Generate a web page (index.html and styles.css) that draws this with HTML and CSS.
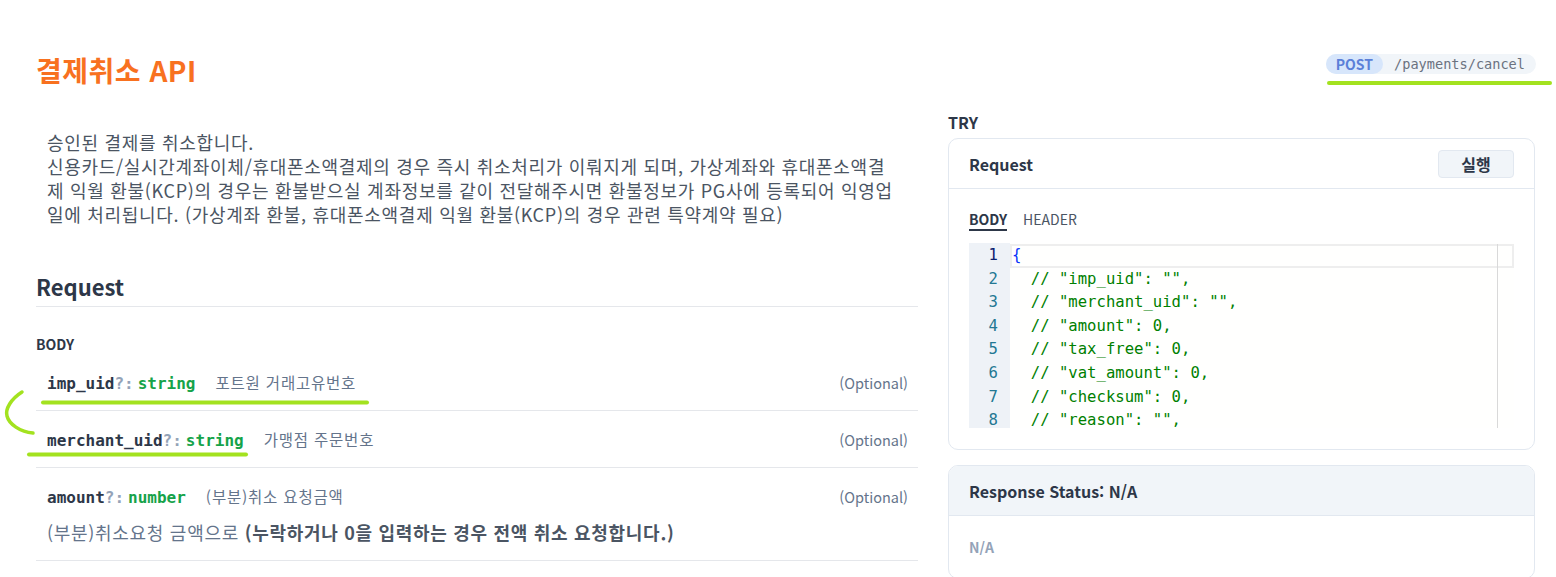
FILE: index.html
```html
<!DOCTYPE html>
<html lang="ko">
<head>
<meta charset="utf-8">
<title>결제취소 API</title>
<link rel="stylesheet" href="styles.css">
</head>
<body>
<div class="page">
  <header class="top">
    <h1 class="title">결제취소 API</h1>
    <div class="endpoint"><span class="method">POST</span><span class="path">/payments/cancel</span></div>
  </header>
  <div class="main">
    <section class="doc">
      <p class="desc">승인된 결제를 취소합니다.<br>신용카드/실시간계좌이체/휴대폰소액결제의 경우 즉시 취소처리가 이뤄지게 되며, 가상계좌와 휴대폰소액결제 익월 환불(KCP)의 경우는 환불받으실 계좌정보를 같이 전달해주시면 환불정보가 PG사에 등록되어 익영업일에 처리됩니다. (가상계좌 환불, 휴대폰소액결제 익월 환불(KCP)의 경우 관련 특약계약 필요)</p>
      <h2 class="section-title">Request</h2>
      <div class="group-label">BODY</div>
      <ul class="fields">
        <li class="field">
          <div class="field-head">
            <span class="fname">imp_uid<span class="opt">?:</span></span><span class="ftype">string</span>
            <span class="fdesc">포트원 거래고유번호</span>
            <span class="optional">(Optional)</span>
          </div>
        </li>
        <li class="field">
          <div class="field-head">
            <span class="fname">merchant_uid<span class="opt">?:</span></span><span class="ftype">string</span>
            <span class="fdesc">가맹점 주문번호</span>
            <span class="optional">(Optional)</span>
          </div>
        </li>
        <li class="field">
          <div class="field-head">
            <span class="fname">amount<span class="opt">?:</span></span><span class="ftype">number</span>
            <span class="fdesc">(부분)취소 요청금액</span>
            <span class="optional">(Optional)</span>
          </div>
          <p class="field-note">(부분)취소요청 금액으로 <strong>(누락하거나 0을 입력하는 경우 전액 취소 요청합니다.)</strong></p>
        </li>
      </ul>
    </section>
    <aside class="try">
      <div class="try-label">TRY</div>
      <div class="card">
        <div class="card-head"><span>Request</span><button class="run" type="button">실행</button></div>
        <div class="card-body">
          <div class="tabs"><span class="tab active">BODY</span><span class="tab">HEADER</span></div>
          <div class="editor">
            <div class="gutter">
              <div class="ln cur">1</div>
              <div class="ln">2</div>
              <div class="ln">3</div>
              <div class="ln">4</div>
              <div class="ln">5</div>
              <div class="ln">6</div>
              <div class="ln">7</div>
              <div class="ln">8</div>
            </div>
            <div class="code">
              <div class="line cur"><span class="brace">{</span></div>
              <div class="line">  // "imp_uid": "",</div>
              <div class="line">  // "merchant_uid": "",</div>
              <div class="line">  // "amount": 0,</div>
              <div class="line">  // "tax_free": 0,</div>
              <div class="line">  // "vat_amount": 0,</div>
              <div class="line">  // "checksum": 0,</div>
              <div class="line">  // "reason": "",</div>
            </div>
            <div class="ruler"></div>
          </div>
        </div>
      </div>
      <div class="card response">
        <div class="card-head resp-head">Response Status: N/A</div>
        <div class="resp-body">N/A</div>
      </div>
    </aside>
  </div>
  <svg class="marks" width="1556" height="577" viewBox="0 0 1556 577" aria-hidden="true">
    <g fill="none" stroke="#a3e21f" stroke-linecap="round" stroke-linejoin="round">
      <path d="M1329 83 L1550 83" stroke-width="4"/>
      <path d="M43 402.5 L367 402.5" stroke-width="4"/>
      <path d="M29 454.5 L246 454.5" stroke-width="4"/>
      <path d="M22 392 C11 399 5 409 7 416 C9 424 20 432 33 433" stroke-width="3.5"/>
    </g>
  </svg>
</div>
</body>
</html>
```

FILE: styles.css
```css
* { box-sizing: border-box; }

html, body {
  margin: 0;
  height: 100%;
  overflow: hidden;
  background: #ffffff;
}

body {
  font-family: "Noto Sans CJK KR", "Noto Sans", sans-serif;
  color: #2d3748;
}

.page {
  position: relative;
  width: 1556px;
  height: 577px;
  padding: 0 21px 0 36px;
}

/* header */
.top {
  display: flex;
  justify-content: space-between;
  align-items: flex-start;
  padding-top: 52px;
}

.title {
  margin: 0;
  font-size: 28px;
  line-height: 36px;
  font-weight: 700;
  letter-spacing: 0.5px;
  color: #f8711f;
}

.endpoint {
  display: flex;
  align-items: center;
  height: 20px;
  margin-top: 2px;
  margin-right: -1px;
  background: #f1f5f9;
  border-radius: 10px;
}

.method {
  height: 20px;
  padding: 0 10px;
  line-height: 20px;
  background: #d7e6fb;
  color: #5b7fd8;
  border-radius: 10px;
  font-size: 14px;
  font-weight: 700;
}

.path {
  padding: 0 11px;
  font-family: "DejaVu Sans Mono", monospace;
  font-size: 13.6px;
  color: #6b7280;
}

/* main */
.main {
  display: flex;
  gap: 30px;
}

.doc {
  width: 882px;
}

.desc {
  margin: 42px 0 0;
  padding-left: 11px;
  width: 859px;
  font-size: 18px;
  line-height: 24px;
  letter-spacing: 0.7px;
  color: #4b5563;
}

.section-title {
  margin: 45px 0 0;
  padding-bottom: 5px;
  font-size: 22px;
  line-height: 30px;
  font-weight: 700;
  color: #2d3748;
  border-bottom: 1px solid #e5e7eb;
}

.group-label {
  margin-top: 27px;
  font-size: 14px;
  line-height: 20px;
  font-weight: 700;
  color: #2d3748;
}

.fields {
  list-style: none;
  margin: 0;
  padding: 0;
}

.field {
  padding: 16px 10px 16px 11px;
  border-bottom: 1px solid #e5e7eb;
}

.field-head {
  display: flex;
  align-items: baseline;
  height: 24px;
  line-height: 24px;
}

.fname,
.ftype {
  font-family: "DejaVu Sans Mono", monospace;
  font-size: 16px;
  font-weight: 700;
}

.fname { color: #2d3748; }
.opt { color: #94a3b8; }
.ftype { margin-left: 4px; color: #16a34a; }

.fdesc {
  margin-left: 20px;
  font-size: 15.5px;
  letter-spacing: 0.8px;
  color: #64748b;
}

.optional {
  margin-left: auto;
  font-size: 14.5px;
  color: #64748b;
}

.field-note {
  margin: 12px 0 0;
  height: 24px;
  font-size: 18px;
  line-height: 24px;
  letter-spacing: 0.7px;
  color: #64748b;
}

.field-note strong {
  font-weight: 700;
  color: #4b5563;
}

/* try panel */
.try {
  width: 587px;
  padding-top: 24px;
}

.try-label {
  margin-bottom: 6px;
  font-size: 16px;
  line-height: 20px;
  font-weight: 700;
  color: #2d3748;
}

.card {
  border: 1px solid #e2e8f0;
  border-radius: 10px;
  background: #ffffff;
  overflow: hidden;
}

.card-head {
  display: flex;
  align-items: center;
  justify-content: space-between;
  height: 50px;
  padding: 0 20px;
  border-bottom: 1px solid #e2e8f0;
  font-size: 16px;
  font-weight: 700;
  color: #2d3748;
}

.run {
  width: 76px;
  height: 28px;
  padding: 0;
  border: 1px solid #e2e8f0;
  border-radius: 4px;
  background: #f1f5f9;
  font-family: inherit;
  font-size: 16px;
  font-weight: 700;
  color: #2d3748;
}

.card-body {
  padding: 20px 20px 21px;
}

.tabs {
  display: flex;
  gap: 16px;
  font-size: 14px;
  line-height: 20px;
}

.tab { color: #4b5563; }

.tab.active {
  font-weight: 700;
  color: #2d3748;
  border-bottom: 2px solid #2d3748;
}

.editor {
  position: relative;
  display: flex;
  height: 185px;
  margin-top: 12px;
  overflow: hidden;
  font-family: "DejaVu Sans Mono", monospace;
  font-size: 15.6px;
  line-height: 23.6px;
}

.gutter {
  width: 41px;
  padding: 1px 12px 0 0;
  background: #eef2f7;
  text-align: right;
  color: #237893;
}

.ln.cur { color: #0b216f; }

.code {
  flex: 1;
  padding-top: 1px;
  background: #fffffe;
}

.line {
  height: 23.6px;
  padding-left: 2px;
  white-space: pre;
  color: #008000;
}

.line.cur { box-shadow: inset 0 0 0 2px #eeeeee; }

.brace { color: #0431fa; }

.ruler {
  position: absolute;
  top: 1px;
  bottom: 0;
  right: 16px;
  width: 1px;
  background: #d9d9d9;
}

/* response */
.response { margin-top: 15px; }

.resp-head { background: #f1f5f9; }

.resp-body {
  padding: 21px 20px;
  font-size: 14px;
  line-height: 20px;
  font-weight: 700;
  color: #94a3b8;
}

/* annotation marks */
.marks {
  position: absolute;
  top: 0;
  left: 0;
  pointer-events: none;
}
```
